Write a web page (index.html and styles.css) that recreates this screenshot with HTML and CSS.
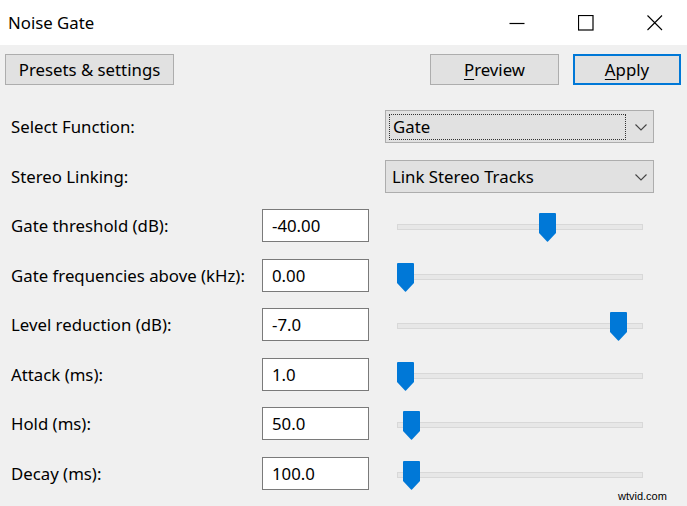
FILE: index.html
```html
<!DOCTYPE html>
<html>
<head>
<meta charset="utf-8">
<link rel="stylesheet" href="styles.css">
</head>
<body>
<div class="window">
  <div class="titlebar">
    <div class="title">Noise Gate</div>
    <div class="controls">
      <span class="ctl"><svg width="16" height="16" viewBox="0 0 16 16"><path d="M0.5 8.5H15.5" stroke="#000" stroke-width="1.2" fill="none"/></svg></span>
      <span class="ctl"><svg width="16" height="16" viewBox="0 0 16 16"><rect x="0.5" y="0.5" width="14.5" height="14.5" stroke="#000" stroke-width="1.2" fill="none"/></svg></span>
      <span class="ctl"><svg width="16" height="16" viewBox="0 0 16 16"><path d="M0.5 0.5L15 15M15 0.5L0.5 15" stroke="#000" stroke-width="1.1" fill="none"/></svg></span>
    </div>
  </div>
  <div class="toolbar">
    <button class="btn presets">Presets &amp; settings</button>
    <div class="spacer"></div>
    <button class="btn preview"><u>P</u>review</button>
    <button class="btn apply"><u>A</u>pply</button>
  </div>
  <div class="form">
    <div class="label wide">Select Function:</div>
    <div class="select"><span class="focus"><span>Gate</span></span><svg class="chev" width="12" height="7" viewBox="0 0 12 7"><path d="M0.5 0.5L6 6L11.5 0.5" stroke="#444" stroke-width="1.1" fill="none"/></svg></div>

    <div class="label wide">Stereo Linking:</div>
    <div class="select"><span class="val">Link Stereo Tracks</span><svg class="chev" width="12" height="7" viewBox="0 0 12 7"><path d="M0.5 0.5L6 6L11.5 0.5" stroke="#444" stroke-width="1.1" fill="none"/></svg></div>

    <div class="label">Gate threshold (dB):</div>
    <div class="box">-40.00</div>
    <div class="slider"><div class="track"></div><svg class="thumb" style="left:142px" width="17" height="29" viewBox="0 0 17 29"><path d="M1 0H16Q17 0 17 1V20L9 28.5Q8.5 29 8 28.5L0 20V1Q0 0 1 0Z" fill="#0078d7"/></svg></div>

    <div class="label">Gate frequencies above (kHz):</div>
    <div class="box">0.00</div>
    <div class="slider"><div class="track"></div><svg class="thumb" style="left:0px" width="17" height="29" viewBox="0 0 17 29"><path d="M1 0H16Q17 0 17 1V20L9 28.5Q8.5 29 8 28.5L0 20V1Q0 0 1 0Z" fill="#0078d7"/></svg></div>

    <div class="label">Level reduction (dB):</div>
    <div class="box">-7.0</div>
    <div class="slider"><div class="track"></div><svg class="thumb" style="left:213px" width="17" height="29" viewBox="0 0 17 29"><path d="M1 0H16Q17 0 17 1V20L9 28.5Q8.5 29 8 28.5L0 20V1Q0 0 1 0Z" fill="#0078d7"/></svg></div>

    <div class="label">Attack (ms):</div>
    <div class="box">1.0</div>
    <div class="slider"><div class="track"></div><svg class="thumb" style="left:0px" width="17" height="29" viewBox="0 0 17 29"><path d="M1 0H16Q17 0 17 1V20L9 28.5Q8.5 29 8 28.5L0 20V1Q0 0 1 0Z" fill="#0078d7"/></svg></div>

    <div class="label">Hold (ms):</div>
    <div class="box">50.0</div>
    <div class="slider"><div class="track"></div><svg class="thumb" style="left:6px" width="17" height="29" viewBox="0 0 17 29"><path d="M1 0H16Q17 0 17 1V20L9 28.5Q8.5 29 8 28.5L0 20V1Q0 0 1 0Z" fill="#0078d7"/></svg></div>

    <div class="label">Decay (ms):</div>
    <div class="box">100.0</div>
    <div class="slider"><div class="track"></div><svg class="thumb" style="left:6px" width="17" height="29" viewBox="0 0 17 29"><path d="M1 0H16Q17 0 17 1V20L9 28.5Q8.5 29 8 28.5L0 20V1Q0 0 1 0Z" fill="#0078d7"/></svg></div>
  </div>
  <div class="watermark">wtvid.com</div>
</div>
</body>
</html>
```

FILE: styles.css
```css
* { box-sizing: border-box; }
html, body {
  margin: 0;
  padding: 0;
  width: 687px;
  height: 506px;
  overflow: hidden;
  background: #f0f0f0;
}
body {
  font-family: "Noto Sans", "Open Sans", sans-serif;
  font-size: 16.8px;
  color: #000;
}
.window {
  position: relative;
  width: 687px;
  height: 506px;
  background: #f0f0f0;
}
.titlebar {
  height: 45px;
  background: #fff;
  display: flex;
  align-items: center;
}
.title {
  padding-left: 8px;
  font-size: 16.8px;
  flex: 1;
  margin-top: -1px;
}
.controls {
  display: flex;
  align-items: center;
  padding-right: 24px;
}
.ctl {
  display: flex;
  width: 16px;
  height: 16px;
  margin-left: 53px;
}
.ctl:first-child { margin-left: 0; }
.toolbar {
  display: flex;
  padding: 9px 6px 0 5px;
  height: 40px;
}
.spacer { flex: 1; }
.btn {
  font-family: inherit;
  font-size: 16.8px;
  color: #000;
  height: 31px;
  background: #e1e1e1;
  border: 1px solid #adadad;
  padding: 0;
  margin: 0;
  line-height: 28px;
}
.presets { width: 169px; }
.preview { width: 129px; }
.apply {
  width: 108px;
  margin-left: 14px;
  border: 2px solid #0078d7;
}
.btn u { text-decoration-thickness: 1px; text-underline-offset: 3px; }
.form {
  display: grid;
  grid-template-columns: 251px 107px 285px;
  column-gap: 0;
  row-gap: 16.57px;
  padding-left: 11px;
  margin-top: 25px;
  grid-auto-rows: 33px;
}
.label {
  display: flex;
  align-items: center;
  white-space: nowrap;
}
.label.wide { grid-column: 1 / span 2; }
.select {
  grid-column: 3;
  margin-left: 16px;
  display: flex;
  align-items: center;
  background: #e1e1e1;
  border: 1px solid #adadad;
  position: relative;
  padding-left: 6px;
}
.focus {
  display: flex;
  align-items: center;
  width: 237px;
  height: 26px;
  margin-left: -3px;
  padding-left: 3px;
  border: 1px dotted #333;
}
.chev {
  position: absolute;
  right: 6px;
  top: 13px;
}
.box {
  display: flex;
  align-items: center;
  background: #fff;
  border: 1px solid #7a7a7a;
  padding-left: 9px;
}
.slider {
  position: relative;
  margin-left: 16px;
  padding: 0 11px 0 12px;
}
.track {
  margin-top: 15px;
  height: 6px;
  background: #e7e7e7;
  border: 1px solid #d8d8d8;
}
.thumb {
  position: absolute;
  top: 4px;
  margin-left: 12px;
}
.watermark {
  position: absolute;
  left: 618px;
  top: 490px;
  font-family: "Liberation Sans", Arial, sans-serif;
  font-size: 11px;
  color: #000;
}
```
